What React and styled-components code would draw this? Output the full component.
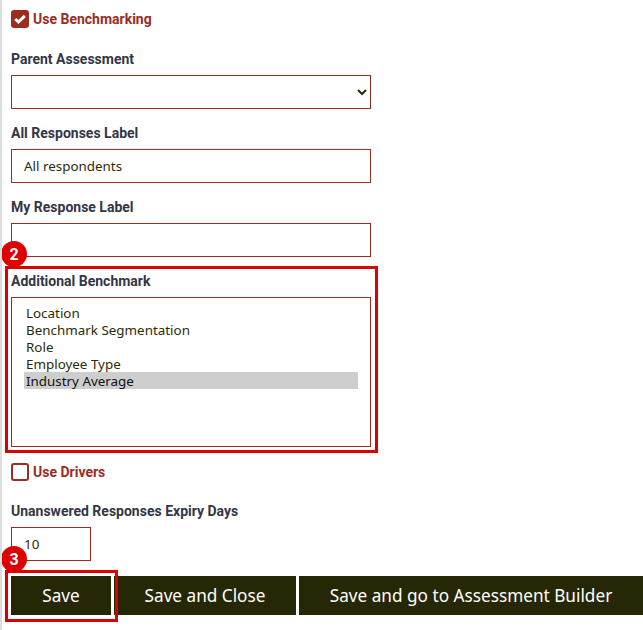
import { createGlobalStyle } from "styled-components";
import styled from "styled-components";

const GlobalStyle = createGlobalStyle`
    html, body {
        margin: 0;
        padding: 0;
        background-color: white;
    }
`;

const BODY_FONT = `"Noto Sans", "Open Sans", sans-serif`;
const LABEL_FONT = `Roboto, "Liberation Sans", sans-serif`;

const Wrapper = styled.div`
    width: 643px;
    height: 630px;
    box-sizing: border-box;
    border-left: 2px solid #dddddd;
    padding: 10px 0 0 9px;
    overflow: hidden;
`;
const CheckRow = styled.label`
    display: flex;
    align-items: center;
    gap: 4px;
    height: 18px;
    margin-top: ${(p) => p.$top || 0}px;
    margin-bottom: ${(p) => p.$bottom}px;
    color: #9b2c1f;
    font-family: ${LABEL_FONT};
    font-size: 14px;
    font-weight: 700;
`;
const CheckBox = styled.span`
    display: flex;
    align-items: center;
    justify-content: center;
    width: 18px;
    height: 18px;
    box-sizing: border-box;
    border: 2px solid #9b2c1f;
    border-radius: 3px;
    background-color: ${(p) => (p.$checked ? "#9b2c1f" : "white")};
`;
const Field = styled.div`
    margin-bottom: ${(p) => p.$bottom ?? 16}px;
`;
const Label = styled.label`
    display: block;
    height: 16px;
    line-height: 16px;
    margin-bottom: 8px;
    color: #333645;
    font-family: ${LABEL_FONT};
    font-size: 14px;
    font-weight: 700;
`;
const Input = styled.input`
    display: block;
    width: ${(p) => p.$width || 360}px;
    height: 34px;
    box-sizing: border-box;
    border: 1px solid #9b2c1f;
    border-radius: 0;
    padding: 0 12px;
    background-color: white;
    color: #2a2c07;
    font-family: ${BODY_FONT};
    font-size: 13.4px;
    outline: none;
`;
const Select = styled.select`
    display: block;
    width: 360px;
    height: 34px;
    box-sizing: border-box;
    border: 1px solid #9b2c1f;
    border-radius: 0;
    padding: 0 8px;
    background-color: white;
    color: #2a2c07;
    font-family: ${BODY_FONT};
    font-size: 13.4px;
`;
const ListBox = styled.select`
    display: block;
    width: 360px;
    height: 150px;
    box-sizing: border-box;
    border: 1px solid #9b2c1f;
    border-radius: 0;
    padding: 6px 12px;
    background-color: white;
    color: #2a2c07;
    font-family: ${BODY_FONT};
    font-size: 13.4px;
    overflow: hidden;
    outline: none;
`;
const Option = styled.option`
    height: 16px;
    min-height: 16px;
    line-height: 16px;
    padding: 0 2px 1px;
`;
const Highlight = styled.div`
    position: relative;
    width: ${(p) => (p.$width ? `${p.$width}px` : "auto")};
`;
const Frame = styled.div`
    position: absolute;
    top: ${(p) => p.$top}px;
    right: ${(p) => p.$right}px;
    bottom: ${(p) => p.$bottom}px;
    left: ${(p) => p.$left}px;
    border: 3px solid #dd0000;
    pointer-events: none;
`;
const Badge = styled.span`
    position: absolute;
    top: ${(p) => p.$top}px;
    left: -10px;
    z-index: 1;
    display: flex;
    align-items: center;
    justify-content: center;
    width: 26px;
    height: 26px;
    border-radius: 50%;
    background-color: #dd0000;
    color: white;
    font-family: ${LABEL_FONT};
    font-size: 16px;
    font-weight: 700;
`;
const ButtonRow = styled.div`
    display: flex;
    gap: 3px;
    margin-top: 15px;
`;
const Button = styled.button`
    display: block;
    flex: none;
    width: ${(p) => p.$width}px;
    height: 39px;
    border: none;
    padding: 0;
    background-color: #262805;
    color: white;
    font-family: ${BODY_FONT};
    font-size: 17.2px;
`;

function Check() {
    return (
        <svg width="12" height="10" viewBox="0 0 12 10">
            <path d="M1.2 5 L4.4 8 L10.8 1.8" fill="none" stroke="white" strokeWidth="3" />
        </svg>
    );
}

function App() {
    return (
        <Wrapper>
            <GlobalStyle />
            <CheckRow $bottom={23}>
                <CheckBox $checked><Check /></CheckBox>
                Use Benchmarking
            </CheckRow>
            <Field>
                <Label>Parent Assessment</Label>
                <Select defaultValue="">
                    <option value=""></option>
                </Select>
            </Field>
            <Field>
                <Label>All Responses Label</Label>
                <Input type="text" defaultValue="All respondents" />
            </Field>
            <Field>
                <Label>My Response Label</Label>
                <Input type="text" />
            </Field>
            <Highlight $width={360}>
                <Frame $top={-7} $right={-7} $bottom={-6} $left={-6} />
                <Badge $top={-32}>2</Badge>
                <Label>Additional Benchmark</Label>
                <ListBox multiple defaultValue={["industry"]}>
                    <Option value="location">Location</Option>
                    <Option value="segmentation">Benchmark Segmentation</Option>
                    <Option value="role">Role</Option>
                    <Option value="employee">Employee Type</Option>
                    <Option value="industry">Industry Average</Option>
                </ListBox>
            </Highlight>
            <CheckRow $top={16} $bottom={22}>
                <CheckBox />
                Use Drivers
            </CheckRow>
            <Field $bottom={0}>
                <Label>Unanswered Responses Expiry Days</Label>
                <Input type="text" defaultValue="10" $width={80} />
            </Field>
            <ButtonRow>
                <Highlight>
                    <Frame $top={-6} $right={-7} $bottom={-7} $left={-6} />
                    <Badge $top={-30}>3</Badge>
                    <Button $width={100}>Save</Button>
                </Highlight>
                <Button $width={182}>Save and Close</Button>
                <Button $width={344}>Save and go to Assessment Builder</Button>
            </ButtonRow>
        </Wrapper>
    );
}

export default App;
